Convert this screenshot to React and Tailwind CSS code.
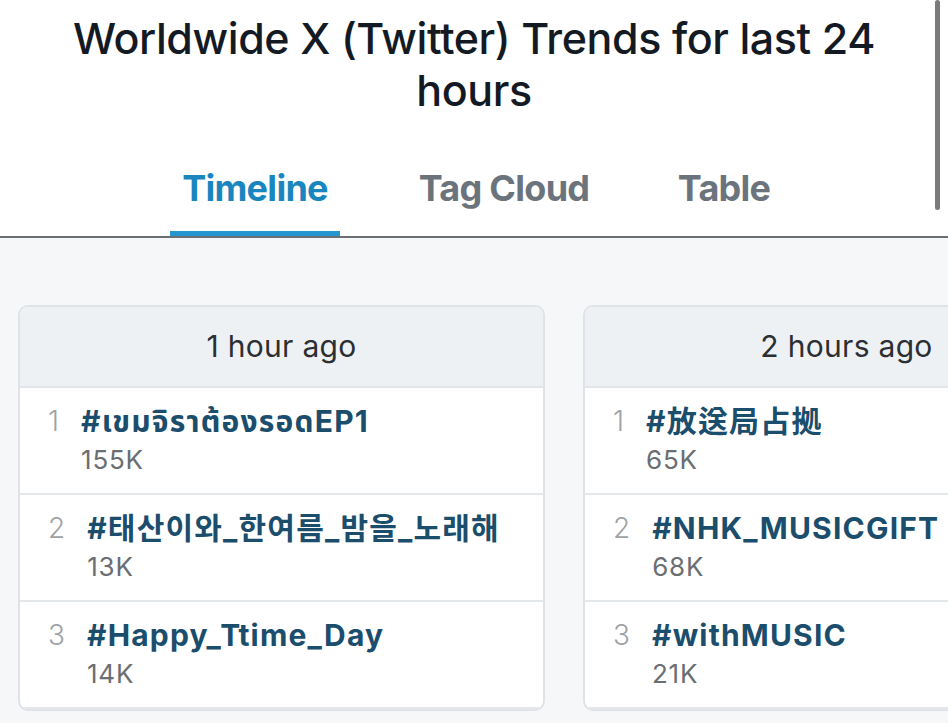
export default function App() {
  const cols = [
    {
      title: "1 hour ago",
      items: [
        { n: 1, tag: "#เขมจิราต้องรอดEP1", c: "155K" },
        { n: 2, tag: "#태산이와_한여름_밤을_노래해", c: "13K" },
        { n: 3, tag: "#Happy_Ttime_Day", c: "14K" },
      ],
    },
    {
      title: "2 hours ago",
      items: [
        { n: 1, tag: "#放送局占拠", c: "65K" },
        { n: 2, tag: "#NHK_MUSICGIFT", c: "68K" },
        { n: 3, tag: "#withMUSIC", c: "21K" },
      ],
    },
  ];
  const font = {
    fontFamily:
      'Inter, "Noto Sans", "Noto Sans Thai", "Noto Sans CJK KR", "Noto Sans CJK SC", sans-serif',
  };
  return (
    <div className="w-[948px] h-[723px] overflow-hidden bg-[#f5f7f9] relative" style={font}>
      <div className="bg-white border-b-2 border-[#6b6e72]">
        <h1 className="pt-[12px] text-center text-[43px] leading-[52px] font-medium text-[#141a23] px-[40px] tracking-[-0.01em]">
          Worldwide X (Twitter) Trends for last 24 hours
        </h1>
        <div className="mt-[50px] flex pl-[170px]">
          <div className="w-[170px] flex flex-col items-center">
            <span className="text-[36px] leading-[44px] font-bold text-[#1a86bf] tracking-[-0.02em]">Timeline</span>
            <div className="mt-[21px] h-[5px] w-full bg-[#2596cf]" />
          </div>
          <div className="w-[328px] flex flex-col items-center">
            <span className="text-[36px] leading-[44px] font-bold text-[#6b737c] tracking-[-0.02em]">Tag Cloud</span>
          </div>
          <div className="w-[112px] flex flex-col items-center">
            <span className="text-[36px] leading-[44px] font-bold text-[#6b737c] tracking-[-0.02em]">Table</span>
          </div>
        </div>
      </div>
      <div className="absolute right-[8px] top-0 w-[5px] h-[210px] rounded-full bg-[#7a7a7a]" />
      <div className="flex gap-[38px] pl-[18px] pt-[67px]">
        {cols.map((col) => (
          <div
            key={col.title}
            className="w-[527px] shrink-0 rounded-[10px] border-2 border-[#dfe3e7] bg-white overflow-hidden"
          >
            <div className="h-[81px] bg-[#eef1f4] border-b-2 border-[#e2e5e9] flex items-center justify-center">
              <span className="text-[30px] text-[#2b2f33] tracking-[0.01em]">{col.title}</span>
            </div>
            {col.items.map((it) => (
              <div
                key={it.n}
                className="h-[107px] border-b-2 border-[#e4e7ea] flex pl-[28px] pt-[13px] gap-[22px]"
              >
                <span className="text-[28px] leading-[40px] text-[#9ea2a6] font-light">{it.n}</span>
                <div className="flex flex-col">
                  <span className="text-[30px] leading-[40px] font-bold text-[#1b4d6c] tracking-[0.04em]">{it.tag}</span>
                  <span className="mt-[1px] text-[26px] leading-[36px] text-[#6a6e73] tracking-[0.03em]">{it.c}</span>
                </div>
              </div>
            ))}
          </div>
        ))}
      </div>
    </div>
  );
}
